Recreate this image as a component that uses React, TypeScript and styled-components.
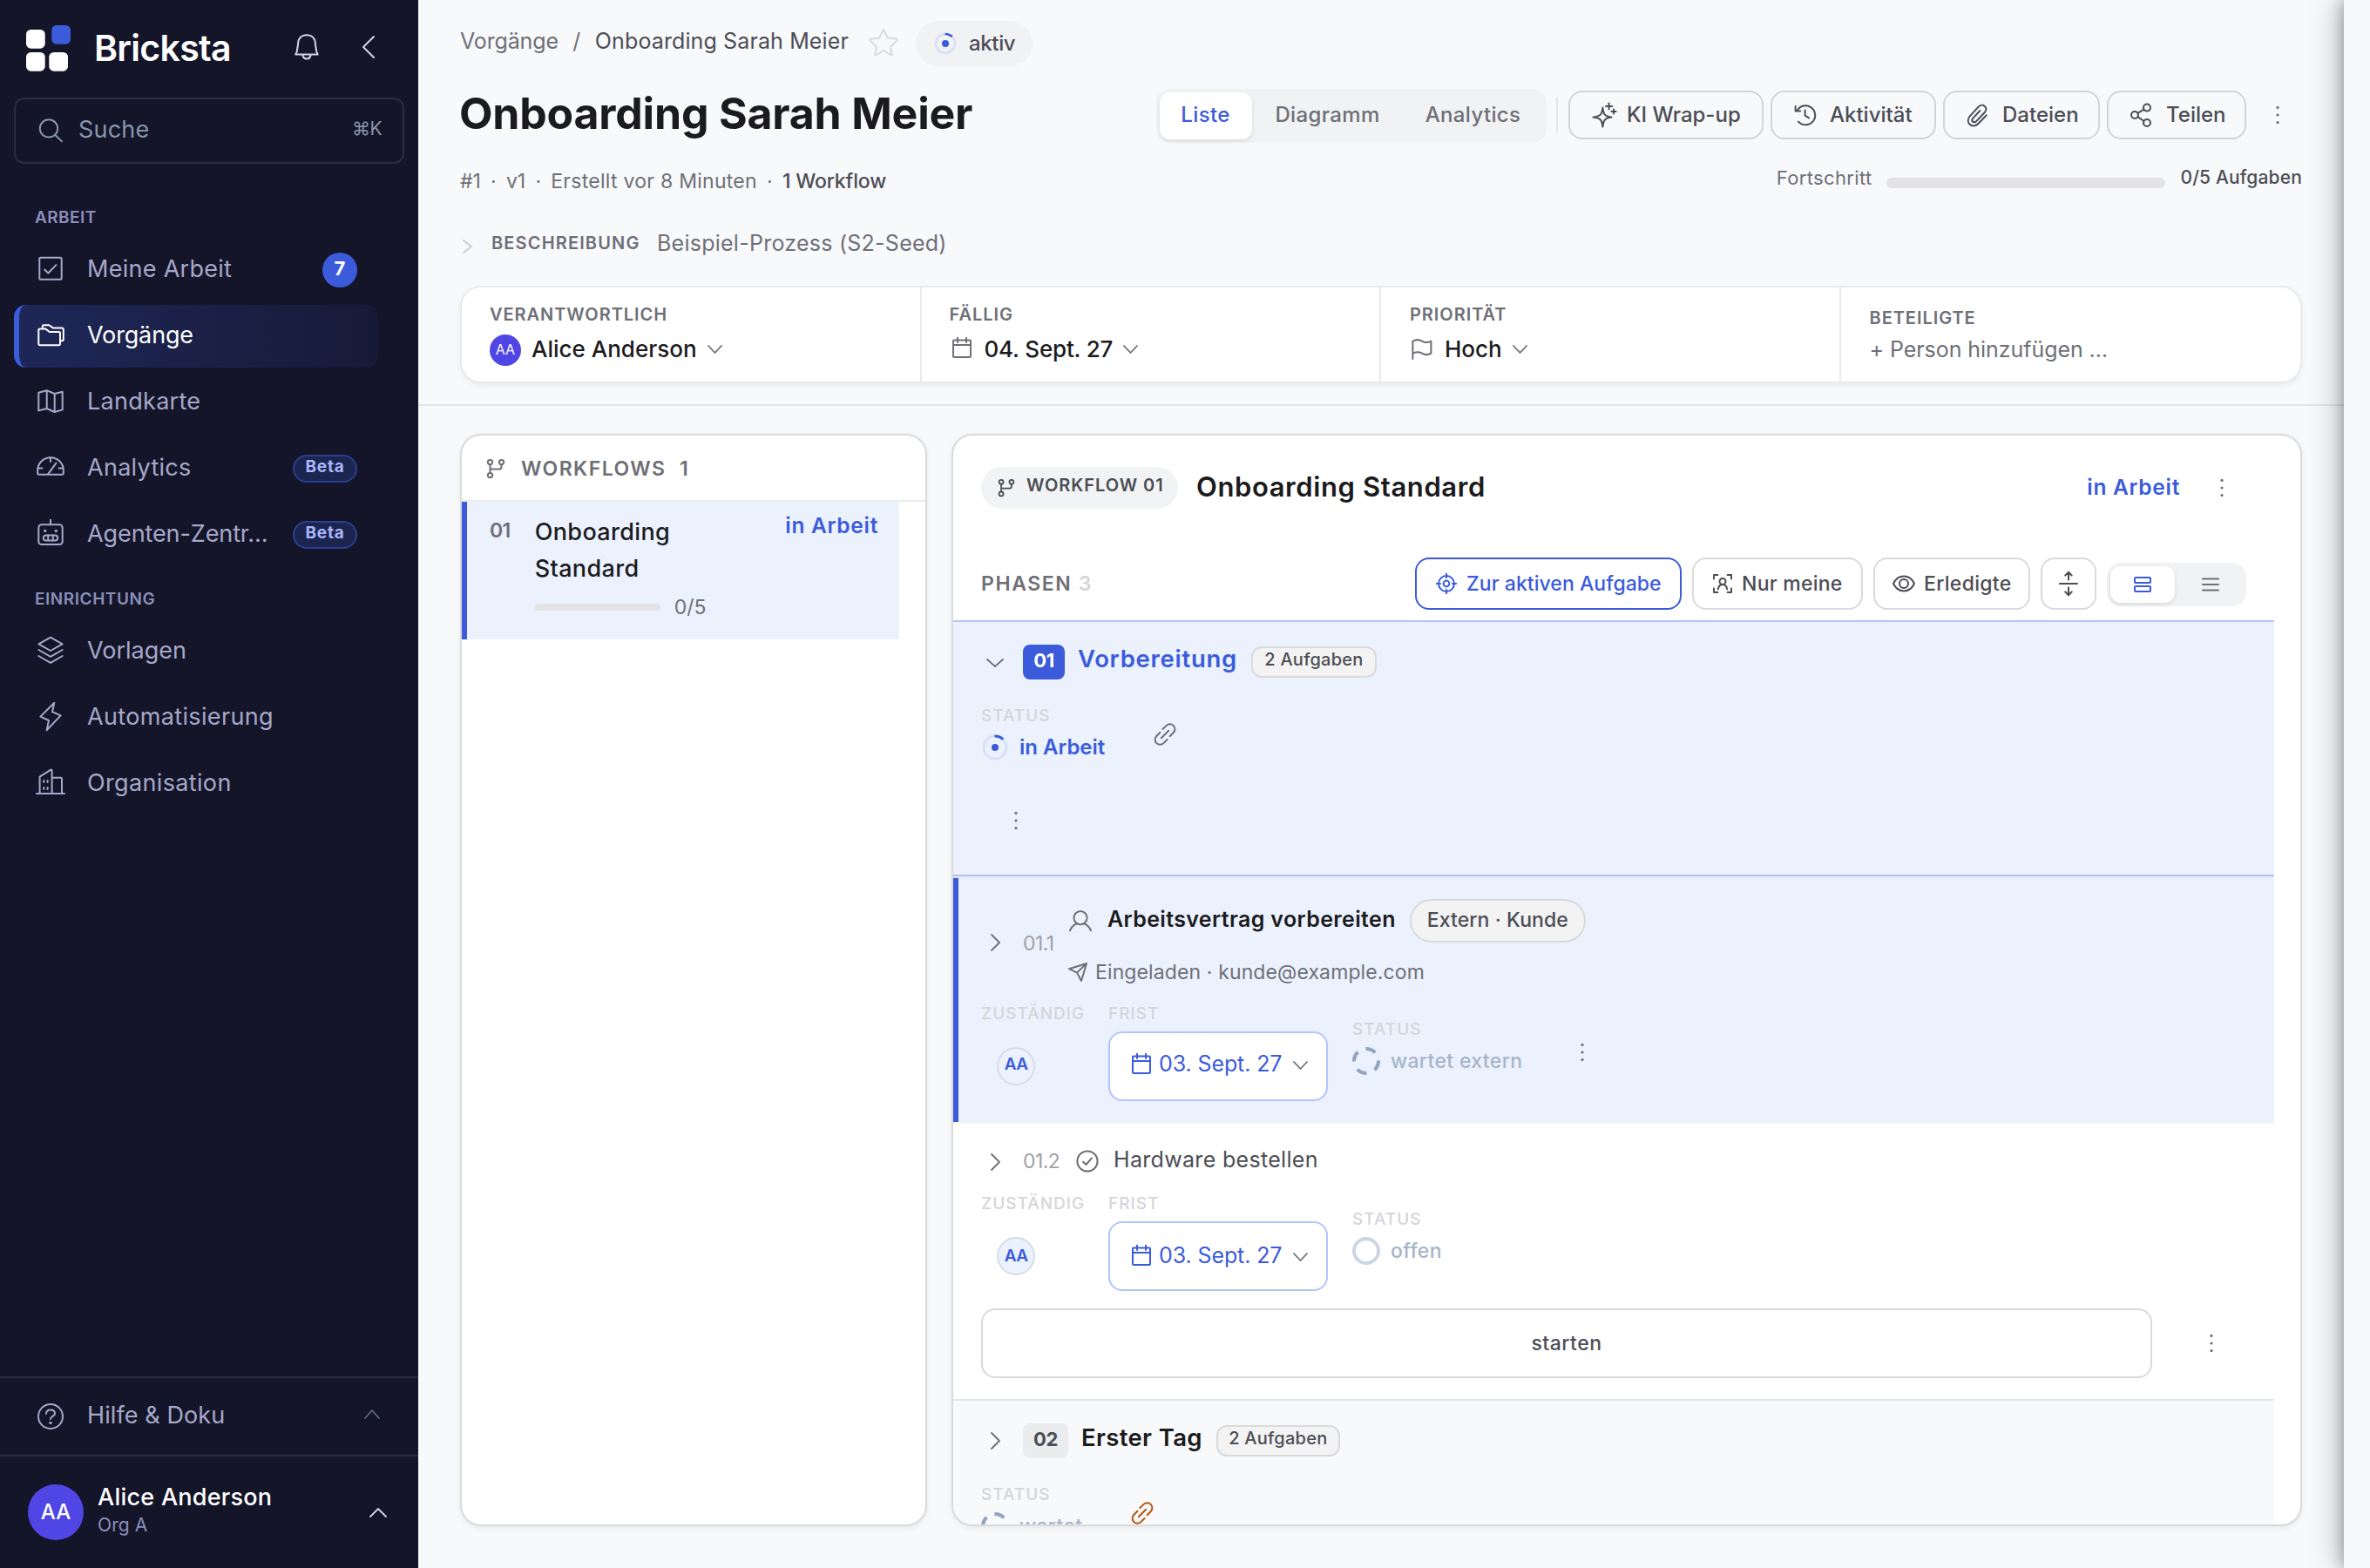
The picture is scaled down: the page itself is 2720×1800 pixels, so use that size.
import React from "react";
import styled, { createGlobalStyle, css } from "styled-components";

const c = {
  night: "#141529",
  nightLine: "#2b2c3e",
  nav: "#a6a8c9",
  section: "#8b8fba",
  slate: "#8796ad",
  blue: "#3b5bdb",
  blueSoft: "#ebf2fe",
  blueLine: "#b4c3fc",
  page: "#f8f9fb",
  ink: "#1b1b1e",
  body: "#4c4d55",
  muted: "#6e6f77",
  faint: "#d4d5d9",
  line: "#e3e4e6",
  edge: "#d9dadb",
};

const Global = createGlobalStyle`
  *, *::before, *::after { box-sizing: border-box; }
  html, body { margin: 0; padding: 0; background: ${c.page}; }
  body { font-family: "Inter", "DejaVu Sans", sans-serif; overflow: hidden; }
  button { font: inherit; margin: 0; padding: 0; background: none; border: 0; }
  h1, h2, h3 { margin: 0; }
`;

/* ---------- primitives ---------- */

const T = styled.span<{ $s: number; $w?: number; $c?: string; $ls?: number; $lh?: number; $up?: number }>`
  flex: none;
  white-space: nowrap;
  font-size: ${p => p.$s}px;
  font-weight: ${p => p.$w ?? 400};
  color: ${p => p.$c ?? "inherit"};
  letter-spacing: ${p => p.$ls ?? 0}px;
  line-height: ${p => p.$lh ?? 32}px;
  ${p => p.$up && css`margin-bottom: ${p.$up * 2}px;`}
`;

const Svg = styled.svg<{ $c?: string }>`
  flex: none;
  display: block;
  overflow: visible;
  fill: none;
  stroke: ${p => p.$c ?? "currentColor"};
  stroke-width: 2;
  stroke-linecap: round;
  stroke-linejoin: round;
`;

type IconProps = { w: number; h?: number; c?: string; children: React.ReactNode };
const Icon = ({ w, h = w, c: color, children }: IconProps) => (
  <Svg width={w} height={h} viewBox={`0 0 ${w} ${h}`} $c={color}>{children}</Svg>
);

const IconSlot = styled.span<{ $w: number; $mt?: number; $ml?: number; $mb?: number }>`
  flex: none;
  display: flex;
  align-items: center;
  justify-content: center;
  width: ${p => p.$w}px;
  margin: ${p => p.$mt ?? 0}px 0 ${p => p.$mb ?? 0}px ${p => p.$ml ?? 0}px;
`;

const ChevDown = ({ c: col = c.muted, w = 17 }: { c?: string; w?: number }) => (
  <Icon w={w} h={10} c={col}><path strokeWidth="1.8" d={`M1 1 L${w / 2} 9 L${w - 1} 1`} /></Icon>
);
const ChevUp = ({ c: col, w = 20 }: { c: string; w?: number }) => (
  <Icon w={w} h={11} c={col}><path strokeWidth="1.8" d={`M1 10 L${w / 2} 1 L${w - 1} 10`} /></Icon>
);
const ChevRight = ({ c: col = c.muted, h = 20 }: { c?: string; h?: number }) => (
  <Icon w={11} h={h} c={col}><path strokeWidth="1.8" d={`M1 1 L10 ${h / 2} L1 ${h - 1}`} /></Icon>
);
const Dots = () => (
  <Icon w={4} h={22}>
    <g fill={c.muted} stroke="none"><circle cx="2" cy="2.4" r="1.6" /><circle cx="2" cy="11" r="1.6" /><circle cx="2" cy="19.6" r="1.6" /></g>
  </Icon>
);
const Branch = ({ w = 22, c: col = c.muted }: { w?: number; c?: string }) => (
  <Svg width={w} height={w} viewBox="0 0 22 22" $c={col}>
    <circle cx="4.5" cy="3.6" r="2.7" /><circle cx="17.5" cy="3.6" r="2.7" /><circle cx="4.5" cy="18.6" r="2.7" />
    <path d="M4.5 6.3 V15.9 M17.5 6.3 V9.2 Q17.5 11.6 15 11.6 H4.5" />
  </Svg>
);
const Calendar = ({ c: col }: { c: string }) => (
  <Icon w={22} h={24} c={col}>
    <rect x="1" y="3.6" width="20" height="19.4" rx="1" /><path d="M1 9 H21 M6 .8 V6 M16 .8 V6" />
  </Icon>
);
const ProgressRing = ({ r = 13, w = 3 }: { r?: number; w?: number }) => (
  <Icon w={32}>
    <circle cx="16" cy="16" r={r} stroke="#d8e0f8" strokeWidth={w} />
    <circle cx="16" cy="16" r={r} stroke={c.blue} strokeWidth={w} strokeLinecap="butt" pathLength="100" strokeDasharray="13 87" transform="rotate(-92 16 16)" />
    <circle cx="16" cy="16" r="4" fill={c.blue} stroke="none" />
  </Icon>
);
const DashedRing = () => (
  <Icon w={32} c="#93a4bd">
    <circle cx="16" cy="16" r="14" strokeWidth="4" strokeLinecap="butt" pathLength="100" strokeDasharray="13.5 11.5" transform="rotate(-92 16 16)" />
  </Icon>
);
const OpenRing = () => (
  <Icon w={32} c="#cbd5e3"><circle cx="16" cy="16" r="14" strokeWidth="4" /></Icon>
);
const LinkIcon = ({ c: col }: { c: string }) => (
  <Icon w={26} c={col}>
    <path d="M10.4 7 L14.6 2.9 a5.6 5.6 0 0 1 8.1 0 a5.7 5.7 0 0 1 0 8.1 L18.6 15.2" />
    <path d="M15.6 19 L11.4 23.1 a5.6 5.6 0 0 1 -8.1 0 a5.7 5.7 0 0 1 0 -8.1 L7.4 10.8" />
    <path d="M8.8 17.2 L17.2 8.8" />
  </Icon>
);

/* ---------- shell ---------- */

const Shell = styled.div`
  display: flex;
  width: 2720px;
  height: 1800px;
  overflow: hidden;
  background: ${c.page};
`;

const Drawer = styled.div`
  flex: none;
  width: 30px;
  background: ${c.page};
  box-shadow: 0 0 40px 0 rgba(0, 0, 0, 0.32), 0 0 18px 0 rgba(0, 0, 0, 0.32);
  z-index: 2;
`;

/* ---------- sidebar ---------- */

const Sidebar = styled.aside`
  flex: none;
  display: flex;
  flex-direction: column;
  width: 480px;
  background: ${c.night};
`;
const Brand = styled.div`
  display: flex;
  align-items: center;
  height: 112px;
  padding-left: 30px;
`;
const BrandName = styled.span`
  width: 256px;
  margin-bottom: 2px;
  padding-left: 26px;
  color: #fff;
  font-size: 41px;
  font-weight: 600;
  letter-spacing: -0.7px;
  line-height: 48px;
`;
const SearchBox = styled.div`
  display: flex;
  align-items: center;
  height: 76px;
  margin: 0 16px;
  padding: 0 24px 2px 26px;
  border: 2px solid ${c.nightLine};
  border-radius: 12px;
`;
const SearchLabel = styled.span`
  flex: 1;
  padding-left: 18px;
  color: ${c.slate};
  font-size: 27px;
  letter-spacing: 0.2px;
  line-height: 36px;
`;
const Section = styled.div<{ $mt: number }>`
  display: flex;
  align-items: center;
  height: 32px;
  margin-top: ${p => p.$mt}px;
  padding: 2px 0 0 40px;
`;
const NavList = styled.nav<{ $mt: number }>`
  display: flex;
  flex-direction: column;
  gap: 4px;
  margin: ${p => p.$mt}px 46px 0 16px;
`;
const NavItem = styled.a<{ $on?: boolean }>`
  display: flex;
  align-items: center;
  height: 72px;
  padding: 0 24px 0 20px;
  border-left: 6px solid ${p => (p.$on ? c.blue : "transparent")};
  border-radius: 14px;
  color: ${p => (p.$on ? "#fff" : c.nav)};
  ${p => p.$on && css`background: linear-gradient(90deg, #1e2758, #171a37) border-box;`}
`;
const NavLabel = styled.span<{ $ls?: number }>`
  flex: 1;
  min-width: 0;
  margin: 0 10px 0 26px;
  white-space: nowrap;
  font-size: 27px;
  line-height: 36px;
  letter-spacing: ${p => p.$ls ?? 0.28}px;
  padding-bottom: 2px;
`;
const CountBadge = styled.span`
  display: flex;
  align-items: center;
  justify-content: center;
  width: 40px;
  height: 40px;
  padding-bottom: 4px;
  border-radius: 50%;
  background: ${c.blue};
  color: #fff;
  font-size: 22px;
  font-weight: 700;
`;
const BetaBadge = styled.span`
  display: flex;
  align-items: center;
  justify-content: center;
  width: 74px;
  height: 32px;
  padding-bottom: 5px;
  border: 2px solid #2b3f90;
  border-radius: 16px;
  background: #1c254f;
  color: #a9b6fb;
  font-size: 19px;
  font-weight: 700;
  letter-spacing: 0.8px;
`;
const HelpRow = styled.div`
  display: flex;
  align-items: center;
  height: 90px;
  margin-top: auto;
  padding: 0 44px 1px 42px;
  border-top: 2px solid ${c.nightLine};
  color: ${c.nav};
`;
const UserRow = styled.div`
  display: flex;
  align-items: center;
  height: 130px;
  padding: 0 36px 0 32px;
  border-top: 2px solid ${c.nightLine};
`;
const UserText = styled.div`
  display: flex;
  flex-direction: column;
  flex: 1;
  padding: 0 0 7px 16px;
`;
const Avatar = styled.span<{ $d: number; $f: number; $mt?: number; $w?: number }>`
  flex: none;
  display: flex;
  align-items: center;
  justify-content: center;
  width: ${p => p.$d}px;
  height: ${p => p.$d}px;
  margin-top: ${p => p.$mt ?? 0}px;
  padding-bottom: 2px;
  border-radius: 50%;
  background: #5046e5;
  color: #fff;
  font-size: ${p => p.$f}px;
  font-weight: ${p => p.$w ?? 500};
`;

const navIcons: Record<string, React.ReactNode> = {
  work: <><rect x="3.3" y="1.7" width="25.4" height="25" rx="1.5" /><path d="M9.2 15.5 L13.4 19.5 L22.4 10.1" /></>,
  cases: <><path d="M2.3 9.2 Q2.3 7.4 4 7.4 H10 L14.8 11 H25.4 Q27 11 27 12.6 V24.6 Q27 26.2 25.4 26.2 H4 Q2.3 26.2 2.3 24.6 Z" /><path d="M6.8 7.2 V4.6 Q6.8 3.2 8.2 3.2 H14.4 L19 6.6 H29 Q30.8 6.6 30.8 8.2 V19.6 Q30.8 21.2 29 21.2 H27.2" /></>,
  map: <path d="M2.3 4.8 L11.7 2.2 L20.7 6 L29.7 3.8 V24.4 L20.7 27 L11.7 23 L2.3 25.4 Z M11.7 2.2 V23 M20.7 6 V27" />,
  gauge: <><path d="M1.2 21 V18 A14.8 14.8 0 0 1 30.8 18 V21 Q30.8 22.7 29.1 22.7 H2.9 Q1.2 22.7 1.2 21 Z" /><path d="M16 3.3 V8 M1.6 15.4 H6.4 M25.6 15.4 H30.4 M13.2 22.2 L22.4 9.6" /></>,
  robot: <><rect x="2.3" y="4.3" width="27.4" height="22.8" rx="3.4" /><path strokeLinecap="butt" d="M16 -2 V4" /><rect x="7.8" y="16.6" width="16.4" height="6" rx="3" /><path d="M13.2 16.6 V22.6 M18.8 16.6 V22.6" /><g fill="currentColor" stroke="none"><circle cx="9.7" cy="11.4" r="1.7" /><circle cx="22.3" cy="11.4" r="1.7" /></g></>,
  layers: <path d="M16 -.3 L29.6 7.3 L16 15 L2.4 7.3 Z M2.3 14 L16 21.8 L29.7 14 M2.3 21 L16 28.8 L29.7 21" />,
  bolt: <path d="M20.3 -1.2 L4.4 14.6 L14 19 L11.6 30.2 L27.6 13.4 L18 9.2 Z" />,
  org: <><path d="M0 27 H32 M3.6 27 V7.6 L16.4 -.4 Q17.6 -.6 17.6 .6 V27 M17.6 8.8 H27.6 Q29 8.8 29 10.2 V27" /><path d="M8.3 12 V14 M12.6 12 V14 M8.3 20 V22 M12.6 20 V22" /></>,
};

type NavEntryProps = { id: string; label: string; extra?: React.ReactNode; on?: boolean; ls?: number };
const NavEntry = ({ id, label, extra, on, ls }: NavEntryProps) => (
  <NavItem $on={on}>
    <Icon w={32}>{navIcons[id]}</Icon>
    <NavLabel $ls={ls}>{label}</NavLabel>
    {extra}
  </NavItem>
);

const SidebarView = () => (
  <Sidebar>
    <Brand>
      <Svg width="52" height="54" viewBox="0 0 52 54">
        <g stroke="none" fill="#fff">
          <rect x="0" y="5" width="21.7" height="21.7" rx="5.5" />
          <rect x="0" y="31" width="21.7" height="21.7" rx="5.5" />
          <rect x="26.3" y="31" width="21.7" height="21.7" rx="5.5" />
          <rect x="29.3" y="0" width="21.7" height="21.7" rx="5.5" fill={c.blue} />
        </g>
      </Svg>
      <BrandName>Bricksta</BrandName>
      <IconSlot $w={28} $mb={4}>
        <Icon w={28} h={30} c="#d2d3ea">
          <path d="M1.4 23.6 Q1.2 21.8 2.6 21 L4 12 C4 5 8 1.2 14 1.2 C20 1.2 24 5 24 12 L25.4 21 Q26.8 21.8 26.6 23.6 Z" />
          <path d="M9.4 24 Q10 28.4 14 28.4 Q18 28.4 18.6 24" />
        </Icon>
      </IconSlot>
      <IconSlot $w={14} $ml={50} $mb={4}>
        <Icon w={14} h={26} c="#d2d3ea"><path d="M13 1 L1 13 L13 25" /></Icon>
      </IconSlot>
    </Brand>
    <SearchBox>
      <Icon w={28} c={c.slate}><circle cx="12" cy="12.4" r="10.2" /><path d="M19.4 20 L27 27.4" /></Icon>
      <SearchLabel>Suche</SearchLabel>
      <T $s={21} $c={c.slate} $ls={-0.6} $up={1}>⌘K</T>
    </SearchBox>
    <Section $mt={45}><T $s={19} $w={600} $c={c.section} $ls={0.45}>ARBEIT</T></Section>
    <NavList $mt={9}>
      <NavEntry id="work" label="Meine Arbeit" extra={<CountBadge>7</CountBadge>} />
      <NavEntry id="cases" label="Vorgänge" ls={-0.15} on />
      <NavEntry id="map" label="Landkarte" />
      <NavEntry id="gauge" label="Analytics" extra={<BetaBadge>Beta</BetaBadge>} />
      <NavEntry id="robot" label="Agenten-Zentr…" ls={-0.1} extra={<BetaBadge>Beta</BetaBadge>} />
    </NavList>
    <Section $mt={21}><T $s={19} $w={600} $c={c.section} $ls={0.55}>EINRICHTUNG</T></Section>
    <NavList $mt={9}>
      <NavEntry id="layers" label="Vorlagen" ls={0} />
      <NavEntry id="bolt" label="Automatisierung" ls={0.35} />
      <NavEntry id="org" label="Organisation" ls={0.35} />
    </NavList>
    <HelpRow>
      <Icon w={32}>
        <circle cx="16" cy="16" r="14" />
        <path d="M11 13 C11 9.8 13.2 8.4 16 8.4 C18.9 8.4 21 10 21 12.6 C21 16.2 16 15.6 16 19" />
        <circle cx="16" cy="23.4" r="1.7" fill="currentColor" stroke="none" />
      </Icon>
      <NavLabel $ls={0.1}>Hilfe &amp; Doku</NavLabel>
      <IconSlot $w={18} $mb={5}><ChevUp c="#62648a" w={18} /></IconSlot>
    </HelpRow>
    <UserRow>
      <Avatar $d={64} $f={24}>AA</Avatar>
      <UserText>
        <T $s={27} $w={500} $c="#fff" $ls={0.25} $lh={36}>Alice Anderson</T>
        <T $s={21} $c={c.section} $ls={0.1} $lh={28}>Org A</T>
      </UserText>
      <ChevUp c="#d2d3ea" />
    </UserRow>
  </Sidebar>
);

/* ---------- header ---------- */

const Main = styled.main`
  flex: none;
  display: flex;
  flex-direction: column;
  width: 2210px;
`;
const Header = styled.header`
  flex: none;
  display: flex;
  flex-direction: column;
  height: 466px;
  padding: 24px 48px 0;
  border-bottom: 2px solid ${c.line};
`;
const Crumbs = styled.div`
  display: flex;
  align-items: center;
  height: 52px;
`;
const CrumbSlash = styled.span`
  width: 42px;
  margin-bottom: 6px;
  text-align: center;
  font-size: 25px;
  color: ${c.muted};
`;
const StatusPill = styled.span`
  display: flex;
  align-items: center;
  width: 134px;
  height: 52px;
  margin-left: 20px;
  padding: 0 0 1px 18px;
  gap: 11px;
  border-radius: 26px;
  background: #f1f2f4;
`;
const TitleRow = styled.div`
  display: flex;
  align-items: flex-start;
  height: 62px;
  margin-top: 26px;
`;
const Title = styled.h1`
  flex: 1;
  margin: -2px 0 0 -1px;
  font-size: 50px;
  font-weight: 700;
  letter-spacing: -0.2px;
  line-height: 60px;
  color: ${c.ink};
`;
const Tabs = styled.div`
  display: flex;
  width: 448px;
  height: 62px;
  padding: 4px;
  border-radius: 16px;
  background: #f1f2f4;
`;
const Tab = styled.button<{ $on?: boolean; $w: number }>`
  width: ${p => p.$w}px;
  height: 54px;
  padding: 0 1px 3px 0;
  border-radius: 12px;
  font-size: 24px;
  font-weight: 500;
  letter-spacing: 0.35px;
  color: ${p => (p.$on ? c.blue : c.muted)};
  ${p => p.$on && css`background: #fff; box-shadow: 0 2px 5px rgba(0, 0, 0, 0.1);`}
`;
const Divider = styled.span`
  width: 2px;
  height: 40px;
  margin: 10px 12px 0 11px;
  background: ${c.line};
`;
const Actions = styled.div`
  display: flex;
  gap: 8px;
  padding-top: 2px;
`;
const ActionButton = styled.button<{ $w: number; $gap?: number }>`
  display: flex;
  align-items: center;
  width: ${p => p.$w}px;
  height: 56px;
  gap: ${p => p.$gap ?? 14}px;
  padding: 0 0 1px 24px;
  border: 2px solid #d3d4d7;
  border-radius: 16px;
  color: ${c.body};
`;
const MoreButton = styled.button<{ $w?: number; $h?: number; $mt?: number; $ml?: number }>`
  flex: none;
  display: flex;
  align-items: center;
  justify-content: center;
  width: ${p => p.$w ?? 56}px;
  height: ${p => p.$h ?? 56}px;
  margin: ${p => p.$mt ?? 0}px 0 0 ${p => p.$ml ?? 0}px;
`;
const MetaRow = styled.div`
  display: flex;
  align-items: center;
  height: 36px;
  margin-top: 26px;
  color: ${c.muted};
`;
const MetaSep = styled.span`
  width: 29px;
  text-align: center;
  font-size: 23px;
`;
const Spacer = styled.span`flex: 1;`;
const Bar = styled.span<{ $w: number; $h: number; $mt?: number }>`
  width: ${p => p.$w}px;
  height: ${p => p.$h}px;
  margin-top: ${p => p.$mt ?? 0}px;
  border-radius: ${p => p.$h / 2}px;
  background: #e3e3e6;
`;
const Progress = styled.div`
  display: flex;
  align-items: center;
  gap: 17px;
`;
const DescRow = styled.div`
  display: flex;
  align-items: center;
  height: 38px;
  margin-top: 34px;
  color: ${c.muted};
`;
const DescLabel = styled.span`
  flex: none;
  width: 210px;
  padding-left: 20px;
  font-size: 20px;
  font-weight: 600;
  letter-spacing: 1.15px;
`;
const Facts = styled.div`
  display: grid;
  grid-template-columns: repeat(4, 1fr);
  height: 112px;
  margin-top: 30px;
  border: 2px solid #e9eaeb;
  border-radius: 24px;
  background: #fff;
  box-shadow: 0 3px 6px rgba(0, 0, 0, 0.06);
`;
const Fact = styled.div<{ $pt?: number }>`
  display: flex;
  flex-direction: column;
  padding: ${p => p.$pt ?? 20}px 0 0 32px;
  border-right: 2px solid #e9eaeb;
  &:nth-child(n + 3) { padding-left: 33px; }
  &:last-child { border-right: 0; }
`;
const FactValue = styled.div<{ $mt?: number; $gap?: number }>`
  display: flex;
  align-items: center;
  height: 40px;
  margin-top: ${p => p.$mt ?? 9}px;
  gap: ${p => p.$gap ?? 12}px;
  color: ${c.ink};
`;
const FactLabel = ({ children }: { children: string }) => (
  <T $s={20} $w={600} $c={c.muted} $ls={0.95} $lh={22}>{children}</T>
);

const HeaderView = () => (
  <Header>
    <Crumbs>
      <T $s={25} $c={c.muted} $ls={-0.15} $up={3}>Vorgänge</T>
      <CrumbSlash>/</CrumbSlash>
      <T $s={25} $c={c.body} $ls={0.12} $up={3}>Onboarding Sarah Meier</T>
      <IconSlot $w={34} $ml={23} $mb={4}>
        <Icon w={34} h={32} c="#d9dade">
          <path d="M17 1.6 L21.4 10.8 Q21.7 11.4 22.4 11.5 L31.6 12.8 Q33.4 13.2 32.2 14.6 L25.6 21.2 Q25 21.8 25.1 22.6 L26.8 30.2 Q26.8 31.8 25.4 31.2 L17.8 26.4 Q17 26 16.2 26.4 L8.6 31.2 Q7.2 31.8 7.2 30.2 L8.9 22.6 Q9 21.8 8.4 21.2 L1.8 14.6 Q.6 13.2 2.4 12.8 L11.6 11.5 Q12.3 11.4 12.6 10.8 Z" />
        </Icon>
      </IconSlot>
      <StatusPill><ProgressRing r={11} w={2.6} /><T $s={24} $w={500} $c={c.body} $ls={-0.35}>aktiv</T></StatusPill>
    </Crumbs>
    <TitleRow>
      <Title>Onboarding Sarah Meier</Title>
      <Tabs><Tab $on $w={106}>Liste</Tab><Tab $w={174}>Diagramm</Tab><Tab $w={160}>Analytics</Tab></Tabs>
      <Divider />
      <Actions>
        <ActionButton $w={224} $gap={11}>
          <Icon w={30} h={30}>
            <path d="M13.4 6.6 C14.4 14.6 15.6 16.4 23.4 17.6 C15.6 18.8 14.4 20.6 13.4 28.6 C12.4 20.6 11.2 18.8 2.4 17.6 C11.2 16.4 12.4 14.6 13.4 6.6 Z" />
            <path d="M20.6 1.4 V8.6 M17 5 H24.2 M26 8.4 V13.6 M23.4 11 H28.6" />
          </Icon>
          <T $s={24} $w={500}>KI Wrap-up</T>
        </ActionButton>
        <ActionButton $w={190} $gap={16}>
          <Icon w={26}>
            <path d="M4.6 8 A11 11 0 1 1 6 20.6" /><path d="M2.6 3 V8.6 H8.2" /><path d="M13.6 7.6 V13.6 L18 16.4" />
          </Icon>
          <T $s={24} $w={500}>Aktivität</T>
        </ActionButton>
        <ActionButton $w={180} $gap={16}>
          <Icon w={26}>
            <path d="M23.8 13.2 L14.4 23 C11.6 26 7.2 26.4 4.6 23.8 C2 21.2 2.2 17.4 4.8 14.4 L14.6 3.6 C16.6 1.4 19.8 1.2 21.8 3 C23.8 5 23.8 7.8 21.8 10 L12 20.4 Q9.8 22.2 8 20.6 Q6.4 18.8 8.2 16.8 L16.4 8" />
          </Icon>
          <T $s={24} $w={500}>Dateien</T>
        </ActionButton>
        <ActionButton $w={160} $gap={16}>
          <Icon w={26}>
            <circle cx="6" cy="13" r="4" /><circle cx="20" cy="4.6" r="4" /><circle cx="20" cy="22" r="4" />
            <path d="M9.4 10.8 L16.6 6.6 M9.4 15.2 L16.6 20" />
          </Icon>
          <T $s={24} $w={500}>Teilen</T>
        </ActionButton>
        <MoreButton><Dots /></MoreButton>
      </Actions>
    </TitleRow>
    <MetaRow>
      <T $s={23}>#1</T><MetaSep>·</MetaSep><T $s={23}>v1</T><MetaSep>·</MetaSep>
      <T $s={23} $ls={0.27}>Erstellt vor 8 Minuten</T><MetaSep>·</MetaSep>
      <T $s={23} $w={500} $c={c.body} $ls={-0.15}>1 Workflow</T>
      <Spacer />
      <Progress>
        <T $s={22} $ls={0.35} $up={4}>Fortschritt</T>
        <Bar $w={320} $h={12} $mt={4} />
        <T $s={21} $w={500} $c={c.body} $ls={0.15} $up={4}>0/5 Aufgaben</T>
      </Progress>
    </MetaRow>
    <DescRow>
      <IconSlot $w={16} $mt={8}><ChevRight h={16} c="#cbccd1" /></IconSlot>
      <DescLabel>BESCHREIBUNG</DescLabel>
      <T $s={25} $ls={0.25}>Beispiel-Prozess (S2-Seed)</T>
    </DescRow>
    <Facts>
      <Fact>
        <FactLabel>VERANTWORTLICH</FactLabel>
        <FactValue>
          <Avatar $d={36} $f={16} $w={400} $mt={2}>AA</Avatar>
          <T $s={26} $w={500}>Alice Anderson</T>
          <ChevDown />
        </FactValue>
      </Fact>
      <Fact>
        <FactLabel>FÄLLIG</FactLabel>
        <FactValue>
          <IconSlot $w={28} $mb={4}><Calendar c={c.muted} /></IconSlot>
          <T $s={26} $w={500} $ls={-0.18}>04. Sept. 27</T>
          <ChevDown />
        </FactValue>
      </Fact>
      <Fact>
        <FactLabel>PRIORITÄT</FactLabel>
        <FactValue>
          <IconSlot $w={28}>
            <Icon w={24} c={c.muted}>
              <path d="M1.4 23 V2.6 C6 .2 9 .8 12 2.6 C15.4 4.6 19 4.4 22.4 2.6 V16.6 C19 18.6 15.4 18.6 12 16.6 C9 14.8 6 14.6 1.4 16.6" />
            </Icon>
          </IconSlot>
          <T $s={26} $w={500}>Hoch</T>
          <ChevDown />
        </FactValue>
      </Fact>
      <Fact $pt={24}>
        <FactLabel>BETEILIGTE</FactLabel>
        <FactValue $mt={5}><T $s={25} $c={c.muted} $ls={-0.06}>+ Person hinzufügen …</T></FactValue>
      </Fact>
    </Facts>
  </Header>
);

/* ---------- body ---------- */

const Content = styled.div`
  flex: 1;
  display: flex;
  gap: 28px;
  min-height: 0;
  padding: 32px 48px 48px;
`;
const Panel = styled.section<{ $w: number }>`
  flex: none;
  display: flex;
  flex-direction: column;
  width: ${p => p.$w}px;
  overflow: hidden;
  border: 2px solid ${c.edge};
  border-radius: 24px;
  background: #fff;
  box-shadow: 0 2px 6px rgba(0, 0, 0, 0.07);
`;
const PanelHead = styled.div`
  display: flex;
  align-items: center;
  height: 76px;
  padding: 1px 0 0 28px;
  border-bottom: 2px solid #ebecee;
`;
const PanelTitle = styled.span`
  width: 182px;
  margin-left: 18px;
  font-size: 23px;
  font-weight: 600;
  letter-spacing: 1.45px;
  color: ${c.muted};
`;
const WorkflowItem = styled.div`
  display: flex;
  height: 158px;
  margin-right: 30px;
  padding: 12px 24px 0 32px;
  background: ${c.blueSoft};
  box-shadow: inset 6px 0 0 ${c.blue};
`;
const WorkflowBody = styled.div`
  flex: 1;
  display: flex;
  flex-direction: column;
  padding: 2px 0 0 28px;
`;
const WorkflowName = styled.h3`
  width: 200px;
  font-size: 27px;
  font-weight: 500;
  letter-spacing: 0.35px;
  line-height: 42px;
  color: ${c.ink};
`;
const WorkflowProgress = styled.div`
  display: flex;
  align-items: center;
  height: 36px;
  margin-top: 5px;
  gap: 16px;
`;

const Scroll = styled.div`
  display: flex;
  flex-direction: column;
  margin-right: 30px;
`;
const DetailHead = styled.div`
  display: flex;
  align-items: center;
  height: 48px;
  margin: 36px 32px 0;
`;
const DetailName = styled.h2`
  flex: 1;
  padding: 0 0 3px 21px;
  font-size: 31px;
  font-weight: 600;
  letter-spacing: 0.6px;
  color: ${c.ink};
`;
const Chip = styled.span`
  display: flex;
  align-items: center;
  width: 226px;
  height: 48px;
  gap: 13px;
  padding: 0 0 0 19px;
  border-radius: 24px;
  background: #f2f3f4;
`;
const Toolbar = styled.div`
  display: flex;
  align-items: center;
  height: 60px;
  margin: 56px 32px 12px;
  gap: 12px;
`;
const PhasesLabel = styled.span`
  flex: 1;
  font-size: 23px;
  font-weight: 600;
  letter-spacing: 1.6px;
  color: ${c.muted};
`;
const PhasesCount = styled.span`color: ${c.faint};`;
const ToolButton = styled.button<{ $w: number; $on?: boolean; $pl?: number; $gap?: number }>`
  display: flex;
  align-items: center;
  width: ${p => p.$w}px;
  height: 60px;
  gap: ${p => p.$gap ?? 11}px;
  padding-left: ${p => p.$pl ?? 22}px;
  border: 2px solid ${p => (p.$on ? c.blue : c.edge)};
  border-radius: 16px;
  color: ${p => (p.$on ? c.blue : c.body)};
  background: #fff;
`;
const Toggle = styled.div`
  display: flex;
  width: 160px;
  height: 50px;
  margin-top: 2px;
  padding: 4px 0 4px 4px;
  border-radius: 16px;
  background: #f1f2f4;
`;
const ToggleItem = styled.button<{ $on?: boolean; $w: number }>`
  flex: none;
  display: flex;
  align-items: center;
  justify-content: center;
  width: ${p => p.$w}px;
  height: 42px;
  border-radius: 12px;
  color: ${p => (p.$on ? c.blue : c.muted)};
  ${p => p.$on && css`background: #fff; box-shadow: 0 2px 5px rgba(0, 0, 0, 0.1);`}
`;

const Phase = styled.div<{ $on?: boolean }>`
  display: flex;
  flex-direction: column;
  height: 294px;
  padding: 26px 32px 0;
  border-top: 2px solid ${p => (p.$on ? c.blueLine : c.line)};
  border-bottom: 2px solid ${p => (p.$on ? c.blueLine : c.line)};
  background: ${p => (p.$on ? c.blueSoft : c.page)};
`;
const PhaseTitle = styled.div`
  display: flex;
  align-items: center;
  height: 40px;
`;
const PhaseNo = styled.span<{ $on?: boolean; $w: number }>`
  display: flex;
  align-items: center;
  justify-content: center;
  width: ${p => p.$w}px;
  height: 40px;
  margin: 0 15px 0 16px;
  padding-bottom: 4px;
  border-radius: 8px;
  background: ${p => (p.$on ? c.blue : "#ebecee")};
  color: ${p => (p.$on ? "#fff" : c.body)};
  font-size: 22px;
  font-weight: 700;
  letter-spacing: -0.3px;
`;
const TaskCount = styled.span<{ $w: number }>`
  display: flex;
  align-items: center;
  justify-content: center;
  width: ${p => p.$w}px;
  height: 36px;
  margin-left: 16px;
  padding-bottom: 6px;
  border: 2px solid ${c.edge};
  border-radius: 12px;
  background: #f3f3f3;
  color: ${c.body};
  font-size: 20px;
  font-weight: 500;
  letter-spacing: 0.25px;
`;
const PhaseMeta = styled.div`
  display: flex;
  align-items: center;
  height: 70px;
  margin-top: 28px;
`;
const PhaseStatus = styled.div<{ $w: number }>`
  display: flex;
  flex-direction: column;
  gap: 4px;
  width: ${p => p.$w}px;
`;
const Inline = styled.div<{ $gap: number; $h: number }>`
  display: flex;
  align-items: center;
  height: ${p => p.$h}px;
  gap: ${p => p.$gap}px;
`;
const ColLabel = styled.span<{ $h?: number }>`
  height: ${p => p.$h ?? 26}px;
  padding-top: 1px;
  white-space: nowrap;
  color: ${c.faint};
  font-size: 19px;
  font-weight: 500;
  letter-spacing: 1px;
  line-height: ${p => p.$h ?? 26}px;
`;

const Task = styled.div<{ $on?: boolean }>`
  display: flex;
  flex-direction: column;
  padding: 24px 32px;
  gap: 20px;
  ${p => p.$on && css`
    border-top: 2px solid #e2e7f4;
    border-bottom: 2px solid #f3f4f6;
    background: ${c.blueSoft};
    background-clip: padding-box;
    box-shadow: inset 6px 0 0 ${c.blue};
  `}
`;
const TaskHead = styled.div<{ $h: number }>`
  display: flex;
  align-items: center;
  height: ${p => p.$h}px;
`;
const TaskNo = styled.span<{ $w: number }>`
  width: ${p => p.$w}px;
  margin-left: 16px;
  padding-top: 1px;
  font-size: 23px;
  letter-spacing: -0.6px;
  color: #9fa0a6;
`;
const TaskIndent = styled.div`margin-left: 16px;`;
const TaskText = styled.div`
  display: flex;
  flex-direction: column;
  height: 100px;
`;
const SubLine = styled.div`
  display: flex;
  align-items: center;
  height: 34px;
  margin-top: 17px;
  padding-left: 2px;
  gap: 9px;
`;
const ExternPill = styled.span`
  display: flex;
  align-items: center;
  justify-content: center;
  width: 202px;
  height: 50px;
  margin-left: 1px;
  padding-bottom: 3px;
  border: 2px solid ${c.edge};
  border-radius: 25px;
  background: #f3f3f3;
  color: ${c.body};
  font-size: 23px;
  font-weight: 500;
  letter-spacing: 0.1px;
`;
const TaskGrid = styled.div`
  display: flex;
  align-items: center;
  height: 112px;
  gap: 28px;
`;
const TaskCol = styled.div<{ $w: number; $pt?: number }>`
  display: flex;
  flex-direction: column;
  width: ${p => p.$w}px;
  height: ${p => (p.$pt ? 112 - p.$pt : 112)}px;
  margin-top: ${p => p.$pt ?? 0}px;
`;
const Assignee = styled.span<{ $lift: number }>`
  display: flex;
  align-items: center;
  justify-content: center;
  width: 44px;
  height: 44px;
  margin: 28px 0 0 18px;
  padding-bottom: ${p => p.$lift * 2}px;
  border: 2px solid #d6dbe8;
  border-radius: 50%;
  background: ${c.blueSoft};
  color: ${c.blue};
  font-size: 19px;
  font-weight: 600;
  letter-spacing: -0.8px;
`;
const DateField = styled.div<{ $lift: number }>`
  display: flex;
  align-items: center;
  height: 80px;
  margin-top: 10px;
  padding: 0 0 ${p => p.$lift * 2}px 25px;
  border: 2px solid ${c.blueLine};
  border-radius: 16px;
  background: #fff;
  color: ${c.blue};
`;
const DateText = styled.span`
  width: 154px;
  margin-left: 9px;
  font-size: 25px;
  letter-spacing: -0.1px;
  & + svg { margin-top: 4px; }
`;
const StartRow = styled.div`
  display: flex;
  gap: 28px;
`;
const StartButton = styled.button`
  width: 1344px;
  height: 80px;
  border: 2px solid ${c.edge};
  border-radius: 16px;
  background: #fff;
  color: ${c.body};
  font-size: 23px;
  font-weight: 500;
  letter-spacing: 0.5px;
`;

type TaskMetaProps = { lift: number; icon: React.ReactNode; status: string; more?: boolean };
const TaskMeta = ({ lift, icon, status, more }: TaskMetaProps) => (
  <TaskGrid>
    <TaskCol $w={118}>
      <ColLabel $h={22}>ZUSTÄNDIG</ColLabel>
      <Assignee $lift={lift}>AA</Assignee>
    </TaskCol>
    <TaskCol $w={252}>
      <ColLabel $h={22}>FRIST</ColLabel>
      <DateField $lift={lift}>
        <Calendar c={c.blue} />
        <DateText>03. Sept. 27</DateText>
        <ChevDown />
      </DateField>
    </TaskCol>
    <TaskCol $w={208} $pt={16}>
      <ColLabel>STATUS</ColLabel>
      <Inline $gap={12} $h={48}>{icon}<T $s={23} $w={500} $c="#a6b4c9" $ls={0.35}>{status}</T></Inline>
    </TaskCol>
    {more && <MoreButton><Dots /></MoreButton>}
  </TaskGrid>
);

const WorkflowsPanel = () => (
  <Panel $w={536}>
    <PanelHead>
      <Branch />
      <PanelTitle>WORKFLOWS</PanelTitle>
      <T $s={23} $w={600} $c={c.muted}>1</T>
    </PanelHead>
    <WorkflowItem>
      <T $s={23} $w={600} $c={c.muted} $ls={-0.6} $lh={42}>01</T>
      <WorkflowBody>
        <WorkflowName>Onboarding Standard</WorkflowName>
        <WorkflowProgress>
          <Bar $w={144} $h={8} />
          <T $s={23} $c={c.muted}>0/5</T>
        </WorkflowProgress>
      </WorkflowBody>
      <T $s={24.5} $w={600} $c={c.blue} $ls={0.7} $lh={30}>in Arbeit</T>
    </WorkflowItem>
  </Panel>
);

const DetailPanel = () => (
  <Panel $w={1550}>
    <Scroll>
      <DetailHead>
        <Chip><Branch w={20} c={c.body} /><T $s={20} $w={600} $c={c.body} $ls={0.95} $up={3}>WORKFLOW 01</T></Chip>
        <DetailName>Onboarding Standard</DetailName>
        <T $s={24.5} $w={600} $c={c.blue} $ls={0.7} $up={1}>in Arbeit</T>
        <MoreButton $ml={20}><Dots /></MoreButton>
      </DetailHead>
      <Toolbar>
        <PhasesLabel>PHASEN <PhasesCount>3</PhasesCount></PhasesLabel>
        <ToolButton $w={306} $on>
          <Icon w={24}>
            <circle cx="12" cy="12" r="9" /><circle cx="12" cy="12" r="3.4" />
            <path d="M12 .8 V5 M12 19 V23.2 M.8 12 H5 M19 12 H23.2" />
          </Icon>
          <T $s={23} $w={500} $ls={0.05}>Zur aktiven Aufgabe</T>
        </ToolButton>
        <ToolButton $w={196}>
          <Icon w={22}>
            <path d="M1 5.4 V1 H5.4 M16.6 1 H21 V5.4 M21 16.6 V21 H16.6 M5.4 21 H1 V16.6" />
            <circle cx="11" cy="8.4" r="3.5" /><path d="M5.8 17.4 C6.4 13.6 8.4 12 11 12 C13.6 12 15.6 13.6 16.2 17.4" />
          </Icon>
          <T $s={23} $w={500} $ls={0.25}>Nur meine</T>
        </ToolButton>
        <ToolButton $w={180} $pl={20} $gap={10}>
          <Icon w={26} h={20}>
            <path d="M1 10 C3.6 4.4 7.8 1.6 13 1.6 C18.2 1.6 22.4 4.4 25 10 C22.4 15.6 18.2 18.4 13 18.4 C7.8 18.4 3.6 15.6 1 10 Z" /><circle cx="13" cy="10" r="5" />
          </Icon>
          <T $s={23} $w={500} $ls={0.3}>Erledigte</T>
        </ToolButton>
        <ToolButton $w={64} $pl={20}>
          <Icon w={20} h={28}>
            <path d="M0 14 H20 M10 1 V9.6 M6.2 4.6 L10 .8 L13.8 4.6 M10 18.4 V27 M6.2 23.4 L10 27.2 L13.8 23.4" />
          </Icon>
        </ToolButton>
        <Toggle>
          <ToggleItem $on $w={74}><Icon w={20} h={18}><rect x="1" y="1" width="18" height="6" rx="1" /><rect x="1" y="11" width="18" height="6" rx="1" /></Icon></ToggleItem>
          <ToggleItem $w={82}><Icon w={20} h={16}><path d="M1 1.4 H19 M1 8 H19 M1 14.6 H19" /></Icon></ToggleItem>
        </Toggle>
      </Toolbar>

      <Phase $on>
        <PhaseTitle>
          <IconSlot $w={32} $mt={2}><ChevDown w={20} /></IconSlot>
          <PhaseNo $on $w={48}>01</PhaseNo>
          <T $s={27.5} $w={600} $c={c.blue} $ls={0.72} $up={4}>Vorbereitung</T>
          <TaskCount $w={144}>2 Aufgaben</TaskCount>
        </PhaseTitle>
        <PhaseMeta>
          <PhaseStatus $w={198}>
            <ColLabel>STATUS</ColLabel>
            <Inline $gap={12} $h={40}><ProgressRing r={13} w={3} /><T $s={24} $w={600} $c={c.blue}>in Arbeit</T></Inline>
          </PhaseStatus>
          <LinkIcon c={c.muted} />
        </PhaseMeta>
        <MoreButton $w={80} $h={48} $mt={40}><Dots /></MoreButton>
      </Phase>

      <Task $on>
        <TaskHead $h={100}>
          <IconSlot $w={32}><ChevRight /></IconSlot>
          <TaskNo $w={34}>01.1</TaskNo>
          <TaskIndent>
            <TaskText>
              <Inline $gap={15} $h={50}>
                <IconSlot $w={32}>
                  <Icon w={26} h={24} c={c.muted}><circle cx="13" cy="8.6" r="7.6" /><path d="M1 23.4 C2.4 19 5.4 16.6 9 15.2 M25 23.4 C23.6 19 20.6 16.6 17 15.2" /></Icon>
                </IconSlot>
                <T $s={25} $w={600} $c={c.ink} $ls={0.36} $up={2}>Arbeitsvertrag vorbereiten</T>
                <ExternPill>Extern · Kunde</ExternPill>
              </Inline>
              <SubLine>
                <Icon w={22} c={c.muted}><path d="M21 1 L1 7.2 L10 11.6 L15 21 Z M21 1 L10 11.6" /></Icon>
                <T $s={23} $c={c.muted} $ls={0.12}>Eingeladen · kunde@example.com</T>
              </SubLine>
            </TaskText>
          </TaskIndent>
        </TaskHead>
        <TaskMeta lift={3} icon={<DashedRing />} status="wartet extern" more />
      </Task>

      <Task>
        <TaskHead $h={36}>
          <IconSlot $w={32} $mt={3}><ChevRight /></IconSlot>
          <TaskNo $w={42}>01.2</TaskNo>
          <TaskIndent>
            <Inline $gap={14} $h={36}>
              <IconSlot $w={32} $mt={2}>
                <Icon w={26} c={c.muted}><circle cx="13" cy="13" r="11.6" /><path d="M8 13.6 L11.4 17 L18 9.4" /></Icon>
              </IconSlot>
              <T $s={25} $c={c.body} $ls={0.32} $up={1}>Hardware bestellen</T>
            </Inline>
          </TaskIndent>
        </TaskHead>
        <TaskMeta lift={1} icon={<OpenRing />} status="offen" />
        <StartRow>
          <StartButton>starten</StartButton>
          <MoreButton $w={80} $h={80}><Dots /></MoreButton>
        </StartRow>
      </Task>

      <Phase>
        <PhaseTitle>
          <IconSlot $w={32}><ChevRight /></IconSlot>
          <PhaseNo $w={52}>02</PhaseNo>
          <T $s={27.5} $w={600} $c={c.ink} $ls={0.35} $up={4}>Erster Tag</T>
          <TaskCount $w={142}>2 Aufgaben</TaskCount>
        </PhaseTitle>
        <PhaseMeta>
          <PhaseStatus $w={172}>
            <ColLabel>STATUS</ColLabel>
            <Inline $gap={12} $h={40}><DashedRing /><T $s={23} $w={500} $c="#a6b4c9" $ls={0.35}>wartet</T></Inline>
          </PhaseStatus>
          <LinkIcon c="#b9540c" />
        </PhaseMeta>
      </Phase>
    </Scroll>
  </Panel>
);

export default function App() {
  return (
    <>
      <Global />
      <Shell>
        <SidebarView />
        <Main>
          <HeaderView />
          <Content>
            <WorkflowsPanel />
            <DetailPanel />
          </Content>
        </Main>
        <Drawer />
      </Shell>
    </>
  );
}
